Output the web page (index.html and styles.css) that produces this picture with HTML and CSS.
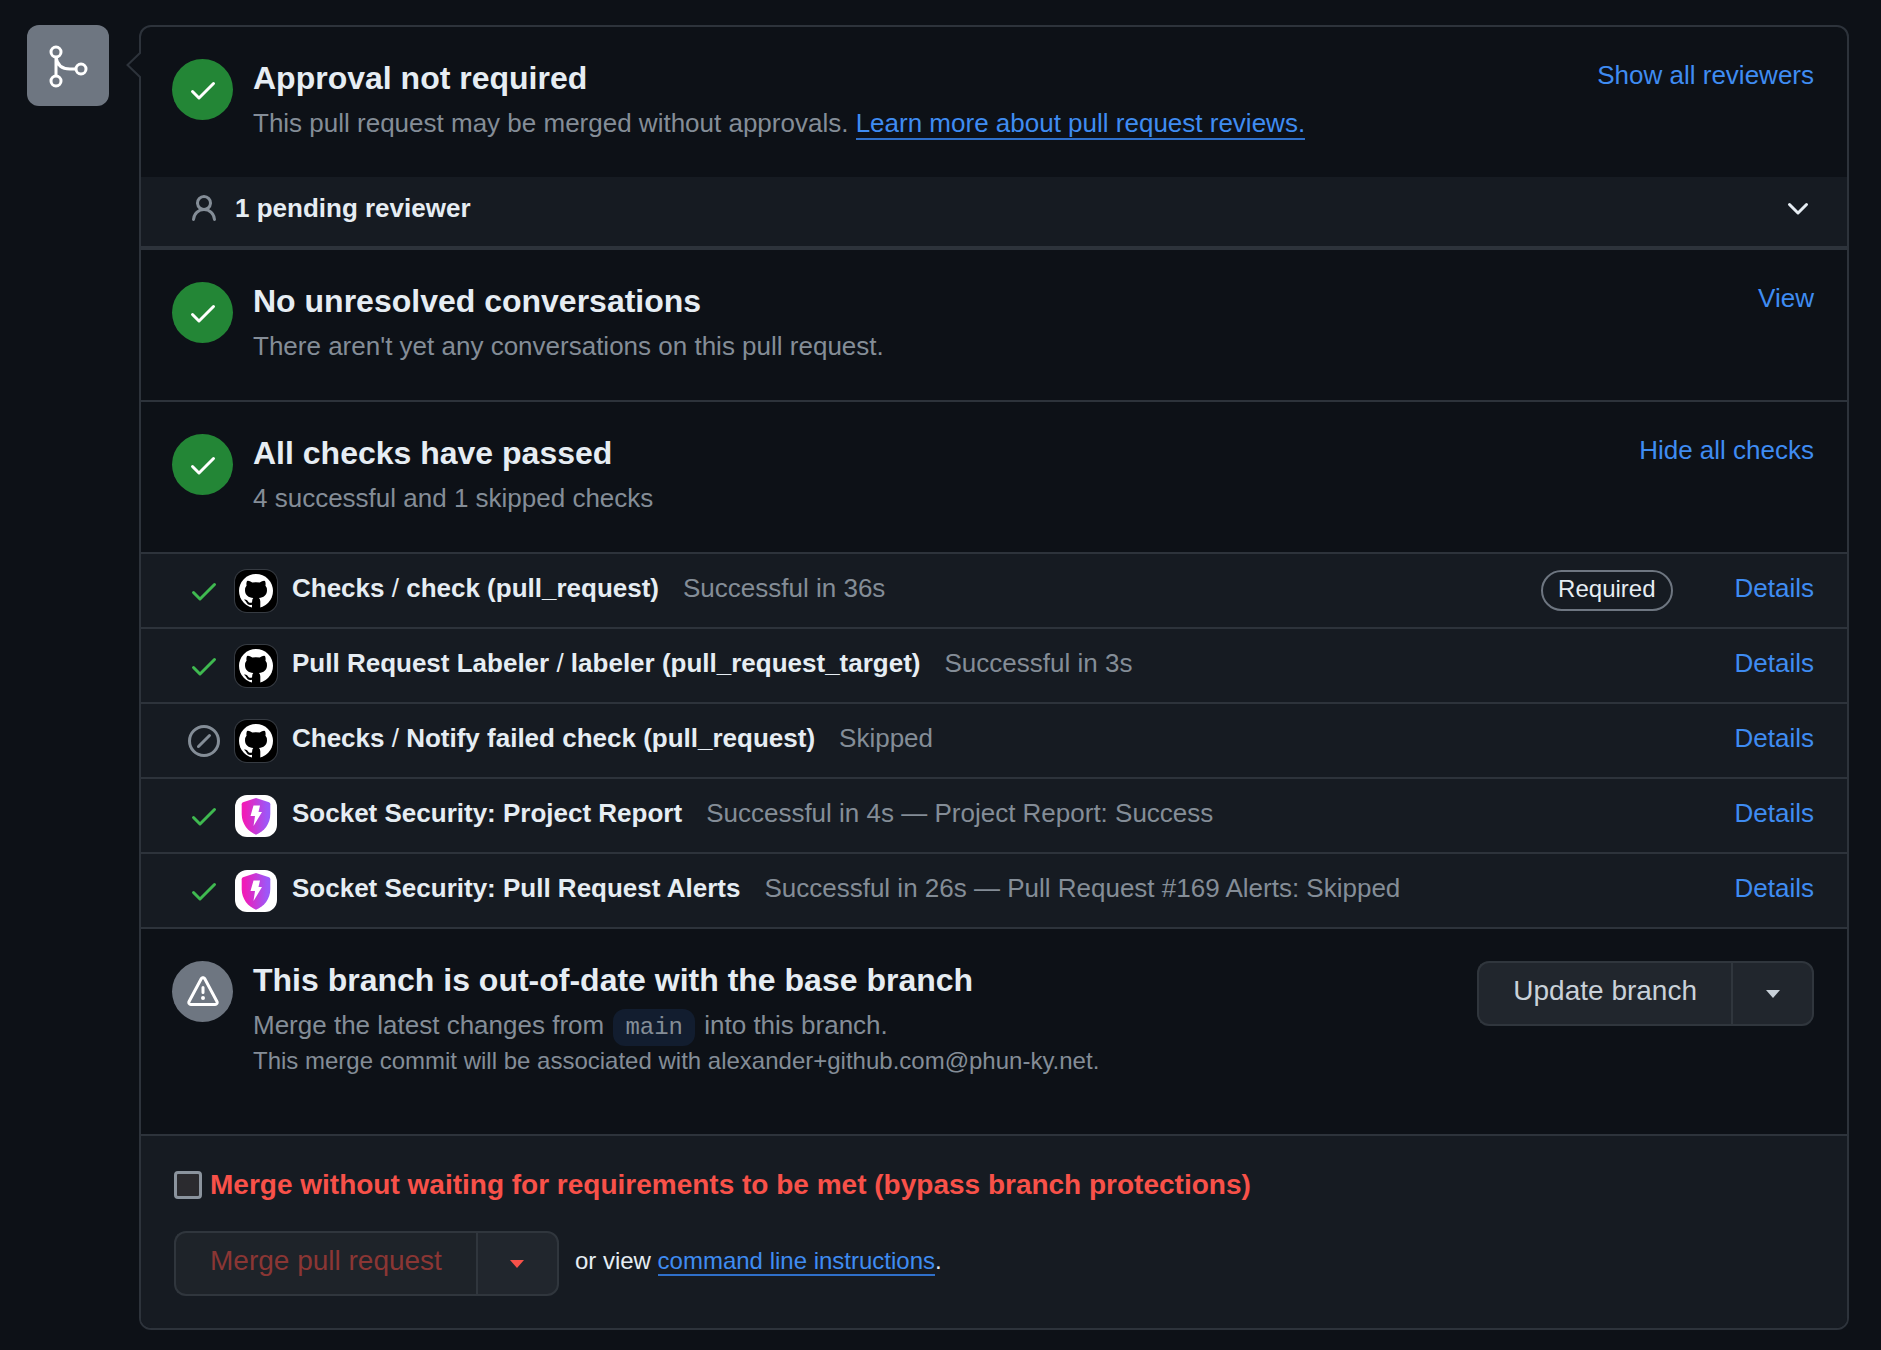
FILE: index.html
```html
<!DOCTYPE html>
<html lang="en">
<head>
    <meta charset="UTF-8">
    <meta name="viewport" content="width=device-width, initial-scale=1.0">
    <title>Merge pull request</title>
    <link rel="stylesheet" href="styles.css">
</head>
<body>
    <!-- Shared icons -->
    <svg class="sprite" aria-hidden="true">
        <symbol id="check" viewBox="0 0 16 16"><path d="M13.78 4.22a.75.75 0 0 1 0 1.06l-7.25 7.25a.75.75 0 0 1-1.06 0L2.22 9.28a.751.751 0 0 1 .018-1.042.751.751 0 0 1 1.042-.018L6 10.94l6.72-6.72a.75.75 0 0 1 1.06 0Z"/></symbol>
        <symbol id="skip" viewBox="0 0 16 16"><path d="M8 0a8 8 0 1 1 0 16A8 8 0 0 1 8 0ZM1.5 8a6.5 6.5 0 1 0 13 0 6.5 6.5 0 0 0-13 0Zm9.78-2.22-5.5 5.5a.749.749 0 0 1-1.275-.326.749.749 0 0 1 .215-.734l5.5-5.5a.751.751 0 0 1 1.042.018.751.751 0 0 1 .018 1.042Z"/></symbol>
        <symbol id="github" viewBox="0 0 34 34">
            <circle cx="17" cy="17" r="17" fill="#fff"/>
            <path fill="#000" d="M8 7Q10 6.300 13.300 8.600 17 7.800 20.700 8.600 24 6.300 26 7 27 9.300 26.400 11.600 28 13.500 28 16.200C28 21.500 24.500 23.300 20 24Q21.300 25.300 21.300 27.500V34H13V30.800C9.500 31.500 8.300 30 7.300 28.200 6.700 27 5.900 26.500 5 25.700 6.500 25 8 25.800 8.900 27.200 9.900 28.800 11.300 29 13 28.400Q13.100 25 14.300 24C9.500 23.300 6 21.500 6 16.200Q6 13.500 7.600 11.600 7 9.300 8 7Z"/>
        </symbol>
        <linearGradient id="shieldFill" x1="0" x2="1" y1="0" y2="0">
            <stop offset="0.1" stop-color="#f01cb8"/>
            <stop offset="0.9" stop-color="#9c58f8"/>
        </linearGradient>
        <symbol id="socket" viewBox="0 0 40 40">
            <path fill="url(#shieldFill)" d="M20 2 33 6.200Q34.300 6.800 34.300 8.200V18C34.300 28 28 35.500 20 38.800 12 35.500 5.700 28 5.700 18V8.200Q5.700 6.800 7 6.200Z"/>
            <path fill="#fff" d="M17.500 9.500h6.500l-1.500 6.500h3.500L17.500 30l1.500-10h-4.500Z"/>
        </symbol>
    </svg>

    <div class="timeline">
        <div class="timeline-badge">
            <svg width="48" height="48" viewBox="0 0 48 48" fill="none" stroke="#fff" stroke-width="3">
                <circle cx="12" cy="10" r="5"/>
                <circle cx="12" cy="39" r="5"/>
                <circle cx="37" cy="27" r="5"/>
                <path d="M12 15v19M12 15c1 8 6 12 14 12h6"/>
            </svg>
        </div>

        <div class="merge-box">
            <svg class="pointer" width="15" height="28" viewBox="0 0 15 28"><path d="M15 1 1.500 14 15 27"/></svg>

            <section class="status">
                <span class="status-icon success"><svg class="icon"><use href="#check"/></svg></span>
                <div class="status-text">
                    <h3>Approval not required</h3>
                    <p>This pull request may be merged without approvals. <a class="underlined" href="#">Learn more about pull request reviews.</a></p>
                </div>
                <a class="status-link" href="#">Show all reviewers</a>
            </section>
            <div class="reviewers">
                <svg class="icon muted" viewBox="0 0 16 16"><path d="M10.561 8.073a6.005 6.005 0 0 1 3.432 5.142.75.75 0 1 1-1.498.07 4.5 4.5 0 0 0-8.99 0 .75.75 0 0 1-1.498-.07 6.004 6.004 0 0 1 3.431-5.142 3.999 3.999 0 1 1 5.123 0ZM10.5 5a2.5 2.5 0 1 0-5 0 2.5 2.5 0 0 0 5 0Z"/></svg>
                <strong>1 pending reviewer</strong>
                <button class="toggle" aria-label="Show reviewers"><svg class="icon" viewBox="0 0 16 16"><path d="M12.780 5.220a.749.749 0 0 1 0 1.060l-4.250 4.250a.749.749 0 0 1-1.060 0L3.220 6.280a.749.749 0 1 1 1.060-1.060L8 8.939l3.720-3.719a.749.749 0 0 1 1.060 0Z"/></svg></button>
            </div>

            <section class="status divided">
                <span class="status-icon success"><svg class="icon"><use href="#check"/></svg></span>
                <div class="status-text">
                    <h3>No unresolved conversations</h3>
                    <p>There aren't yet any conversations on this pull request.</p>
                </div>
                <a class="status-link" href="#">View</a>
            </section>

            <section class="status divided">
                <span class="status-icon success"><svg class="icon"><use href="#check"/></svg></span>
                <div class="status-text">
                    <h3>All checks have passed</h3>
                    <p>4 successful and 1 skipped checks</p>
                </div>
                <a class="status-link" href="#">Hide all checks</a>
            </section>

            <ul class="checks">
                <li>
                    <svg class="icon green"><use href="#check"/></svg>
                    <span class="avatar dark"><svg width="34" height="34"><use href="#github"/></svg></span>
                    <span class="check-name"><strong>Checks</strong> / <strong>check (pull_request)</strong></span>
                    <span class="check-result">Successful in 36s</span>
                    <span class="label">Required</span>
                    <a class="details" href="#">Details</a>
                </li>
                <li>
                    <svg class="icon green"><use href="#check"/></svg>
                    <span class="avatar dark"><svg width="34" height="34"><use href="#github"/></svg></span>
                    <span class="check-name"><strong>Pull Request Labeler</strong> / <strong>labeler (pull_request_target)</strong></span>
                    <span class="check-result">Successful in 3s</span>
                    <a class="details" href="#">Details</a>
                </li>
                <li>
                    <svg class="icon muted"><use href="#skip"/></svg>
                    <span class="avatar dark"><svg width="34" height="34"><use href="#github"/></svg></span>
                    <span class="check-name"><strong>Checks</strong> / <strong>Notify failed check (pull_request)</strong></span>
                    <span class="check-result">Skipped</span>
                    <a class="details" href="#">Details</a>
                </li>
                <li>
                    <svg class="icon green"><use href="#check"/></svg>
                    <span class="avatar light"><svg width="40" height="40"><use href="#socket"/></svg></span>
                    <span class="check-name"><strong>Socket Security: Project Report</strong></span>
                    <span class="check-result">Successful in 4s — Project Report: Success</span>
                    <a class="details" href="#">Details</a>
                </li>
                <li>
                    <svg class="icon green"><use href="#check"/></svg>
                    <span class="avatar light"><svg width="40" height="40"><use href="#socket"/></svg></span>
                    <span class="check-name"><strong>Socket Security: Pull Request Alerts</strong></span>
                    <span class="check-result">Successful in 26s — Pull Request #169 Alerts: Skipped</span>
                    <a class="details" href="#">Details</a>
                </li>
            </ul>

            <section class="status divided outdated">
                <span class="status-icon neutral"><svg class="icon" viewBox="0 0 16 16"><path d="M6.457 1.047c.659-1.234 2.427-1.234 3.086 0l6.082 11.378A1.75 1.75 0 0 1 14.082 15H1.918a1.75 1.75 0 0 1-1.543-2.575Zm1.763.707a.25.25 0 0 0-.44 0L1.698 13.132a.25.25 0 0 0 .22.368h12.164a.25.25 0 0 0 .22-.368Zm.53 3.996v2.5a.75.75 0 0 1-1.500 0v-2.5a.75.75 0 0 1 1.500 0ZM9 11a1 1 0 1 1-2 0 1 1 0 0 1 2 0Z"/></svg></span>
                <div class="status-text">
                    <h3>This branch is out-of-date with the base branch</h3>
                    <p>Merge the latest changes from <code>main</code> into this branch.</p>
                    <p class="small">This merge commit will be associated with alexander+github.com@phun-ky.net.</p>
                </div>
                <div class="btn-group">
                    <button>Update branch</button>
                    <button class="caret" aria-label="Select update method"><svg width="14" height="8" viewBox="0 0 14 8"><path d="M0 0h14L7 8Z"/></svg></button>
                </div>
            </section>

            <div class="merge-footer">
                <div class="bypass">
                    <input type="checkbox" id="bypass">
                    <label for="bypass">Merge without waiting for requirements to be met (bypass branch protections)</label>
                </div>
                <div class="merge-actions">
                    <div class="btn-group danger">
                        <button disabled>Merge pull request</button>
                        <button class="caret" aria-label="Select merge method"><svg width="14" height="8" viewBox="0 0 14 8"><path d="M0 0h14L7 8Z"/></svg></button>
                    </div>
                    <span class="cli">or view <a class="underlined" href="#">command line instructions</a>.</span>
                </div>
            </div>
        </div>
    </div>
</body>
</html>
```
FILE: styles.css
```css
* { box-sizing: border-box; }
body {
    margin: 0;
    padding: 25px 32px 18px 27px;
    background-color: #0d1117;
    color: #e6edf3;
    font-family: "Liberation Sans", Arial, sans-serif;
    font-size: 26px;
    line-height: 39px;
}
a { color: #3f8cf2; text-decoration: none; }
h3, p, ul { margin: 0; padding: 0; }
button { font: inherit; color: inherit; cursor: pointer; }

.sprite { position: absolute; width: 0; height: 0; }
.icon {
    display: block;
    flex: none;
    width: 32px;
    height: 32px;
    fill: currentColor;
}
.muted { color: #848d97; }
.green { color: #3fb950; }
.underlined { border-bottom: 2px solid #2f6fc9; }

.timeline {
    display: flex;
    align-items: flex-start;
    gap: 30px;
}
.timeline-badge {
    display: flex;
    flex: none;
    align-items: center;
    justify-content: center;
    width: 82px;
    height: 81px;
    border-radius: 12px;
    background-color: #6e7681;
}
.merge-box {
    position: relative;
    flex: 1;
    border: 2px solid #2d333b;
    border-radius: 12px;
}
/* Arrow pointing at the badge */
.pointer {
    position: absolute;
    left: -15px;
    top: 24px;
    fill: #0d1117;
    stroke: #2d333b;
    stroke-width: 2px;
}

.status {
    display: flex;
    align-items: flex-start;
    gap: 20px;
    padding: 32px 33px 34px 31px;
}
.divided { border-bottom: 2px solid #2d333b; }
.status-icon {
    display: flex;
    flex: none;
    align-items: center;
    justify-content: center;
    width: 61px;
    height: 61px;
    border-radius: 50%;
    color: #fff;
}
.success { background-color: #238636; }
.neutral { background-color: #6e7681; }
.status-text { flex: 1; color: #848d97; }
.status-text h3 {
    margin-bottom: 7px;
    color: #e6edf3;
    font-size: 32px;
    line-height: 38px;
}
.status-link { line-height: 32px; }

.reviewers {
    display: flex;
    align-items: center;
    gap: 15px;
    height: 73px;
    padding: 0 33px 6px 47px;
    background-color: #161b22;
    border-bottom: 4px solid #2d333b;
}
.toggle {
    margin-left: auto;
    padding: 0;
    border: 0;
    background: none;
}

.checks { list-style: none; background-color: #161b22; }
.checks li {
    display: flex;
    align-items: center;
    height: 75px;
    padding: 0 33px 0 47px;
    border-bottom: 2px solid #2d333b;
}
.avatar {
    display: flex;
    flex: none;
    align-items: center;
    justify-content: center;
    width: 42px;
    height: 42px;
    margin: 0 15px;
    border-radius: 12px;
}
.dark { background-color: #000; box-shadow: 0 0 0 1px #363b42; }
.light { background-color: #fff; }
.check-name, .check-result, .details { padding-bottom: 4px; }
.check-result { flex: 1; margin-left: 24px; color: #848d97; }
.label {
    height: 41px;
    padding: 0 15px;
    border: 2px solid #6e7681;
    border-radius: 21px;
    font-size: 24px;
    line-height: 33px;
}
.details { margin-left: 62px; }

.outdated { padding-bottom: 57px; }
.small { font-size: 24px; line-height: 32px; }
code {
    padding: 5px 12px;
    margin: 0 2px;
    border-radius: 12px;
    background-color: #121d2f;
    font-family: "Liberation Mono", monospace;
    font-size: 24px;
    line-height: 1;
}

.btn-group { display: flex; color: #c9d1d9; }
.btn-group button {
    height: 65px;
    padding: 0 34px 7px;
    border: 2px solid #30363d;
    border-right: 0;
    border-radius: 12px 0 0 12px;
    background-color: #21262d;
    font-size: 28px;
}
.btn-group .caret {
    width: 83px;
    padding: 0;
    border-right: 2px solid #30363d;
    border-radius: 0 12px 12px 0;
}
.caret svg { display: block; margin: 0 auto; fill: currentColor; }
.danger { color: #f85149; }
.danger button:disabled { color: #8b3634; background-color: #1e2329; cursor: default; }

.merge-footer {
    padding: 30px 33px 32px;
    border-radius: 0 0 10px 10px;
    background-color: #161b22;
}
.bypass {
    display: flex;
    align-items: center;
    gap: 8px;
    margin-bottom: 27px;
    color: #f85149;
    font-size: 28px;
    font-weight: bold;
    line-height: 38px;
}
.bypass input {
    appearance: none;
    width: 28px;
    height: 28px;
    margin: 0;
    border: 3px solid #8b949e;
    border-radius: 4px;
    background-color: #2b2b2f;
}
.merge-actions { display: flex; align-items: center; gap: 16px; }
.cli { padding-bottom: 7px; font-size: 24px; }
```
